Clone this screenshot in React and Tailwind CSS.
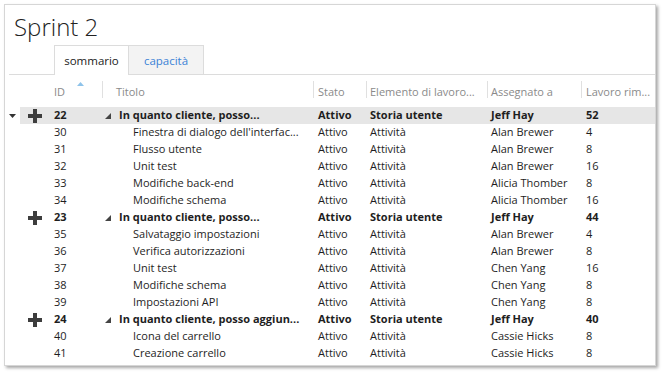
import React from "react";

const rows = [
  { id: 22, parent: true, title: "In quanto cliente, posso...", type: "Storia utente", who: "Jeff Hay", work: 52, open: true },
  { id: 30, title: "Finestra di dialogo dell'interfac...", who: "Alan Brewer", work: 4 },
  { id: 31, title: "Flusso utente", who: "Alan Brewer", work: 8 },
  { id: 32, title: "Unit test", who: "Alan Brewer", work: 16 },
  { id: 33, title: "Modifiche back-end", who: "Alicia Thomber", work: 8 },
  { id: 34, title: "Modifiche schema", who: "Alicia Thomber", work: 16 },
  { id: 23, parent: true, title: "In quanto cliente, posso...", type: "Storia utente", who: "Jeff Hay", work: 44 },
  { id: 35, title: "Salvataggio impostazioni", who: "Alan Brewer", work: 4 },
  { id: 36, title: "Verifica autorizzazioni", who: "Alan Brewer", work: 8 },
  { id: 37, title: "Unit test", who: "Chen Yang", work: 16 },
  { id: 38, title: "Modifiche schema", who: "Chen Yang", work: 8 },
  { id: 39, title: "Impostazioni API", who: "Chen Yang", work: 8 },
  { id: 24, parent: true, title: "In quanto cliente, posso aggiun...", type: "Storia utente", who: "Jeff Hay", work: 40 },
  { id: 40, title: "Icona del carrello", who: "Cassie Hicks", work: 8 },
  { id: 41, title: "Creazione carrello", who: "Cassie Hicks", work: 8 },
];

const PlusIcon = () => (
  <svg width="14" height="14" viewBox="0 0 14 14">
    <path d="M5 0h4v5h5v4H9v5H5V9H0V5h5z" fill="#3d3d3d" />
  </svg>
);

const Sep = () => <span className="absolute left-0 top-[6px] h-[17px] w-px bg-[#e0e0e0]" />;

const App = () => {
  return (
    <div className="w-[665px] h-[374px] bg-white pt-[4px] pl-[4px] font-['Open_Sans',sans-serif] text-[#1e1e1e]">
      <div className="w-[652px] h-[362px] border border-[#d6d6d6] bg-white shadow-[2px_2px_3px_rgba(0,0,0,0.35)] overflow-hidden">
        <div className="h-[40px] pl-[9px] pt-[7px]">
          <h1 className="text-[24px] font-light leading-[30px] text-[#222]">Sprint 2</h1>
        </div>

        <div className="flex h-[30px] border-b border-[#dcdcdc] ml-[4px] pl-[45px]">
          <div className="w-[75px] h-[30px] border border-b-0 border-[#dcdcdc] bg-white flex items-center justify-center pt-[1px] text-[11.5px] text-[#222] -mb-px">
            sommario
          </div>
          <div className="w-[75px] h-[29px] border border-l-0 border-b-0 border-[#dcdcdc] bg-[#f3f3f3] flex items-center justify-center pt-[1px] text-[11.5px] text-[#3b82d6]">
            capacità
          </div>
        </div>

        <div className="flex h-[32px] text-[11px] text-[#8a8a8a]">
          <div className="w-[45px]" />
          <div className="relative w-[52px] pl-[4px] pt-[9px]">
            ID
            <svg className="absolute left-[27px] top-[7px]" width="7" height="4" viewBox="0 0 7 4">
              <path d="M0 4L3.5 0L7 4z" fill="#8ec3ea" />
            </svg>
          </div>
          <div className="relative w-[211px] pl-[14px] pt-[9px]"><Sep />Titolo</div>
          <div className="relative w-[53px] pl-[5px] pt-[9px]"><Sep />Stato</div>
          <div className="relative w-[121px] pl-[4px] pt-[9px]"><Sep />Elemento di lavoro...</div>
          <div className="relative w-[94px] pl-[4px] pt-[9px]"><Sep />Assegnato a</div>
          <div className="relative flex-1 pl-[5px] pt-[9px]"><Sep />Lavoro rim...</div>
        </div>

        <div className="text-[11px]">
          {rows.map((r) => (
            <div key={r.id} className={`flex items-center h-[17px] ${r.parent ? "font-bold" : ""}`}>
              <div className="w-[15px] flex justify-center">
                {r.open && (
                  <svg width="7" height="4" viewBox="0 0 7 4">
                    <path d="M0 0h7L3.5 4z" fill="#333" />
                  </svg>
                )}
              </div>
              <div className={`flex items-center h-[17px] flex-1 ${r.open ? "bg-[#e6e6e6]" : ""}`}>
                <div className="w-[30px] flex justify-center">{r.parent && <PlusIcon />}</div>
                <div className="w-[52px] pl-[4px]">{r.id}</div>
                <div className="w-[211px] whitespace-nowrap overflow-hidden">
                  {r.parent ? (
                    <span className="flex items-center">
                      <svg className="ml-[3px] mr-[8px]" width="6" height="6" viewBox="0 0 6 6">
                        <path d="M6 0V6H0z" fill="#444" />
                      </svg>
                      {r.title}
                    </span>
                  ) : (
                    <span className="pl-[31px]">{r.title}</span>
                  )}
                </div>
                <div className="w-[53px] pl-[5px]">Attivo</div>
                <div className="w-[121px] pl-[4px]">{r.type || "Attività"}</div>
                <div className="w-[94px] pl-[4px] whitespace-nowrap">{r.who}</div>
                <div className="flex-1 pl-[5px]">{r.work}</div>
              </div>
            </div>
          ))}
        </div>
      </div>
    </div>
  );
};

export default App;
